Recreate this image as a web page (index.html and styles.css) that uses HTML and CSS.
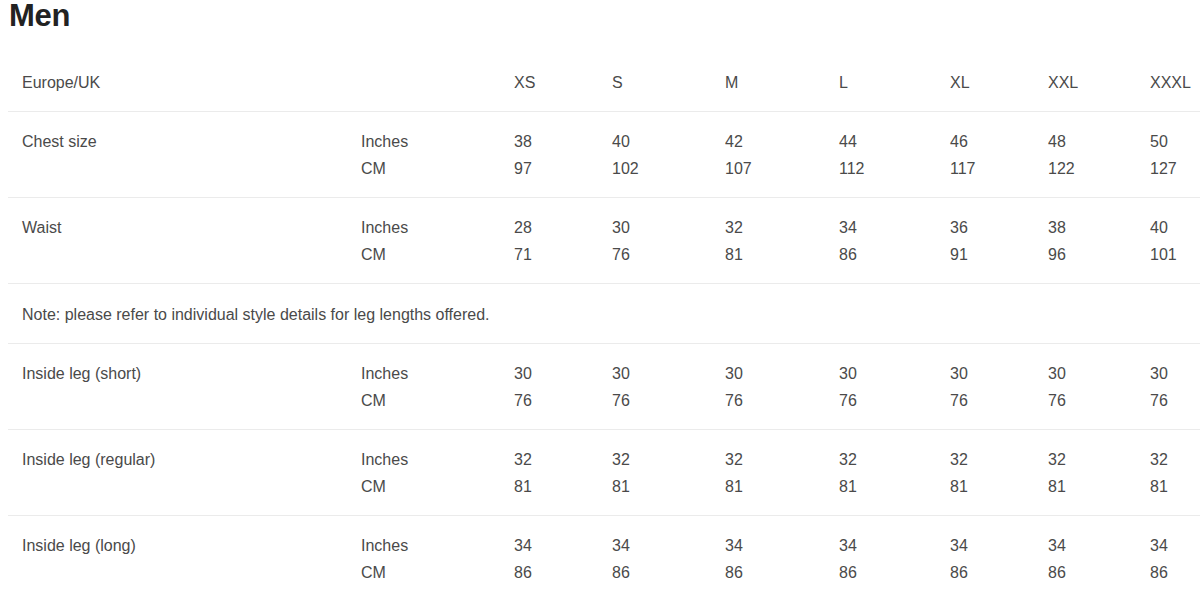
FILE: index.html
```html
<!DOCTYPE html>
<html lang="en">
<head>
<meta charset="utf-8">
<title>Men size chart</title>
<link rel="stylesheet" href="styles.css">
</head>
<body>
<h1 class="title">Men</h1>
<div class="chart">
  <div class="row head">
    <div class="cell">Europe/UK</div>
    <div class="cell"></div>
    <div class="cell">XS</div>
    <div class="cell">S</div>
    <div class="cell">M</div>
    <div class="cell">L</div>
    <div class="cell">XL</div>
    <div class="cell">XXL</div>
    <div class="cell">XXXL</div>
  </div>
  <div class="row">
    <div class="cell">Chest size</div>
    <div class="cell">Inches<br>CM</div>
    <div class="cell">38<br>97</div>
    <div class="cell">40<br>102</div>
    <div class="cell">42<br>107</div>
    <div class="cell">44<br>112</div>
    <div class="cell">46<br>117</div>
    <div class="cell">48<br>122</div>
    <div class="cell">50<br>127</div>
  </div>
  <div class="row">
    <div class="cell">Waist</div>
    <div class="cell">Inches<br>CM</div>
    <div class="cell">28<br>71</div>
    <div class="cell">30<br>76</div>
    <div class="cell">32<br>81</div>
    <div class="cell">34<br>86</div>
    <div class="cell">36<br>91</div>
    <div class="cell">38<br>96</div>
    <div class="cell">40<br>101</div>
  </div>
  <div class="row note">
    <div class="cell span">Note: please refer to individual style details for leg lengths offered.</div>
  </div>
  <div class="row">
    <div class="cell">Inside leg (short)</div>
    <div class="cell">Inches<br>CM</div>
    <div class="cell">30<br>76</div>
    <div class="cell">30<br>76</div>
    <div class="cell">30<br>76</div>
    <div class="cell">30<br>76</div>
    <div class="cell">30<br>76</div>
    <div class="cell">30<br>76</div>
    <div class="cell">30<br>76</div>
  </div>
  <div class="row">
    <div class="cell">Inside leg (regular)</div>
    <div class="cell">Inches<br>CM</div>
    <div class="cell">32<br>81</div>
    <div class="cell">32<br>81</div>
    <div class="cell">32<br>81</div>
    <div class="cell">32<br>81</div>
    <div class="cell">32<br>81</div>
    <div class="cell">32<br>81</div>
    <div class="cell">32<br>81</div>
  </div>
  <div class="row">
    <div class="cell">Inside leg (long)</div>
    <div class="cell">Inches<br>CM</div>
    <div class="cell">34<br>86</div>
    <div class="cell">34<br>86</div>
    <div class="cell">34<br>86</div>
    <div class="cell">34<br>86</div>
    <div class="cell">34<br>86</div>
    <div class="cell">34<br>86</div>
    <div class="cell">34<br>86</div>
  </div>
</div>
</body>
</html>
```

FILE: styles.css
```css
html, body {
  background: #ffffff;
}
body {
  margin: 0 0 0 8px;
  font-family: "Liberation Sans", Arial, sans-serif;
  color: #4a4a4a;
  overflow: hidden;
}
.title {
  margin: 0 0 21px 1px;
  font-size: 31px;
  line-height: 32px;
  font-weight: bold;
  color: #222222;
  letter-spacing: -0.3px;
}
.chart {
  display: flex;
  flex-direction: column;
}
.row {
  display: grid;
  grid-template-columns: 339px 153px 98px 113px 114px 111px 98px 102px 1fr;
  border-bottom: 1px solid #ebebeb;
  font-size: 16px;
  line-height: 27px;
}
.cell {
  padding: 16px 0 15px 14px;
  white-space: nowrap;
}
.note .cell {
  padding-top: 17px;
}
.span {
  grid-column: 1 / -1;
}
```
